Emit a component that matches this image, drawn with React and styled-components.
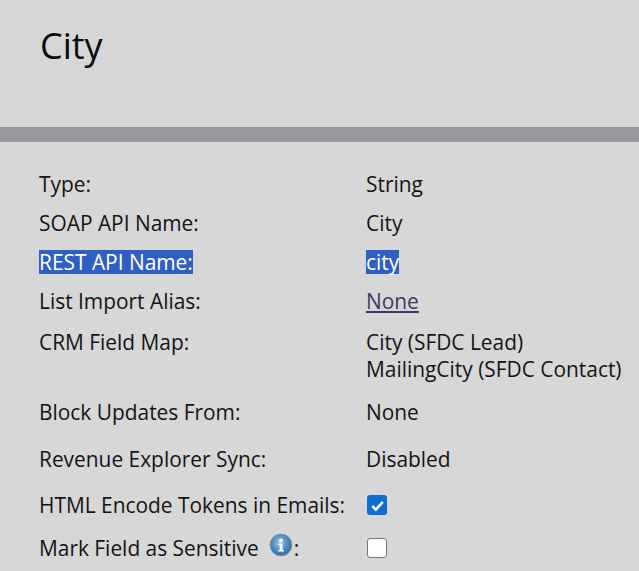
import React from "react";
import styled, { createGlobalStyle } from "styled-components";

const bgColor = '#d7d7d7';
const textColor = '#141414';

const GlobalStyle = createGlobalStyle`
  html, body {
    margin: 0;
    height: 100%;
    overflow: hidden;
    background-color: ${bgColor};
  }
  body {
    font-family: "Open Sans", "Noto Sans", sans-serif;
    color: ${textColor};
  }
`;

const Header = styled.div`
  height: 127px;
  padding: 23px 0 0 40px;
  box-sizing: border-box;
`;

const Title = styled.h1`
  margin: 0;
  font-size: 36px;
  font-weight: 400;
  line-height: 46px;
  color: #0c0c0c;
`;

const Divider = styled.div`
  height: 15px;
  background-color: #99989d;
`;

const Fields = styled.div`
  display: flex;
  flex-direction: column;
  padding: 28px 0 0 39px;
`;

const Row = styled.div`
  display: grid;
  grid-template-columns: 327px 1fr;
  height: ${(props) => props.$height}px;
  font-size: 20.9px;
  line-height: 28px;
`;

const Label = styled.div`
  white-space: nowrap;
`;

const Value = styled.div`
  white-space: nowrap;
`;

const MapValue = styled(Value)`
  padding-top: 1px;
  line-height: 27px;
`;

const Selected = styled.span`
  display: inline-block;
  line-height: 24px;
  background-color: #2f5fc4;
  color: #fff;
`;

const ValueLink = styled.a`
  color: #3a3a64;
  text-decoration: underline;
`;

const CheckBox = styled.span`
  display: flex;
  align-items: center;
  justify-content: center;
  width: 20px;
  height: 20px;
  margin: 4px 0 0 1px;
  box-sizing: border-box;
  border-radius: 3px;
  border: ${(props) => (props.$checked ? 'none' : '1.5px solid #767676')};
  background-color: ${(props) => (props.$checked ? '#0f6cd0' : '#fff')};
`;

const InfoIcon = styled.svg`
  width: 24px;
  height: 24px;
  margin: -3px 1px 0 10px;
  vertical-align: -1px;
`;

function Info() {
  return (
    <InfoIcon viewBox="0 0 24 24">
      <defs>
        <radialGradient id="infoFill" cx="0.45" cy="0.4" r="0.6">
          <stop offset="0" stopColor="#a9cbe6" />
          <stop offset="0.6" stopColor="#4a8cc4" />
          <stop offset="1" stopColor="#2f6b9e" />
        </radialGradient>
      </defs>
      <circle cx="12" cy="12" r="11" fill="url(#infoFill)" stroke="#8a9aa8" strokeWidth="1" />
      <circle cx="12" cy="7.4" r="1.9" fill="#fff" />
      <path d="M9.5 10.5h4v6.5h1.4v1.6H9.3V17h1.4v-4.9H9.5z" fill="#fff" />
    </InfoIcon>
  );
}

function Check() {
  return (
    <svg width="15" height="15" viewBox="0 0 15 15">
      <path d="M2.2 8l3.6 3.6L12.8 3.8" fill="none" stroke="#fff" strokeWidth="2.6" />
    </svg>
  );
}

function App() {
  return (
    <>
      <GlobalStyle />
      <Header>
        <Title>City</Title>
      </Header>
      <Divider />
      <Fields>
        <Row $height={39}>
          <Label>Type:</Label>
          <Value>String</Value>
        </Row>
        <Row $height={39}>
          <Label>SOAP API Name:</Label>
          <Value>City</Value>
        </Row>
        <Row $height={39}>
          <Label><Selected>REST API Name:</Selected></Label>
          <Value><Selected>city</Selected></Value>
        </Row>
        <Row $height={41}>
          <Label>List Import Alias:</Label>
          <Value><ValueLink href="#">None</ValueLink></Value>
        </Row>
        <Row $height={70}>
          <Label>CRM Field Map:</Label>
          <MapValue>City (SFDC Lead)<br />MailingCity (SFDC Contact)</MapValue>
        </Row>
        <Row $height={47}>
          <Label>Block Updates From:</Label>
          <Value>None</Value>
        </Row>
        <Row $height={46}>
          <Label>Revenue Explorer Sync:</Label>
          <Value>Disabled</Value>
        </Row>
        <Row $height={43}>
          <Label>HTML Encode Tokens in Emails:</Label>
          <Value><CheckBox $checked><Check /></CheckBox></Value>
        </Row>
        <Row $height={30}>
          <Label>Mark Field as Sensitive<Info />:</Label>
          <Value><CheckBox /></Value>
        </Row>
      </Fields>
    </>
  );
}

export default App;
